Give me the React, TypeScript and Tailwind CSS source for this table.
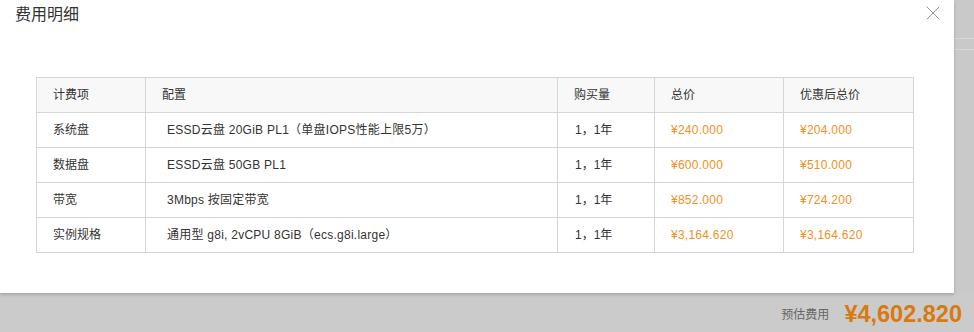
import { X } from "lucide-react";

const rows = [
  { item: "系统盘", config: "ESSD云盘 20GiB PL1（单盘IOPS性能上限5万）", qty: "1，1年", total: "¥240.000", discount: "¥204.000" },
  { item: "数据盘", config: "ESSD云盘 50GB PL1", qty: "1，1年", total: "¥600.000", discount: "¥510.000" },
  { item: "带宽", config: "3Mbps 按固定带宽", qty: "1，1年", total: "¥852.000", discount: "¥724.200" },
  { item: "实例规格", config: "通用型 g8i, 2vCPU 8GiB（ecs.g8i.large）", qty: "1，1年", total: "¥3,164.620", discount: "¥3,164.620" },
];

const font = { fontFamily: '"Liberation Sans", Arial, "Noto Sans CJK SC", sans-serif' };

export default function App() {
  return (
    <div className="w-[974px] h-[332px] bg-[#cbcbcb] flex flex-col overflow-hidden" style={font}>
      <div className="flex h-[293px]">
        <div className="relative w-[954px] h-full bg-white shadow-[0_2px_3px_rgba(0,0,0,0.18)] z-10">
          <div className="pt-[5px] pl-[15px] text-[16px] leading-[20px] text-[#333]">费用明细</div>
          <button type="button" aria-label="close" className="absolute right-[9px] top-[1px] text-[#999]">
            <X size={24} strokeWidth={1} />
          </button>
          <table className="mt-[52px] ml-[36px] w-[877px] table-fixed border-collapse text-[12px] text-[#333]">
            <colgroup>
              <col className="w-[109px]" />
              <col className="w-[412px]" />
              <col className="w-[97px]" />
              <col className="w-[129px]" />
              <col className="w-[130px]" />
            </colgroup>
            <thead>
              <tr className="h-[35px] bg-[#f8f8f8]">
                <th className="border border-[#d6d6d6] pl-[16px] text-left font-normal">计费项</th>
                <th className="border border-[#d6d6d6] pl-[16px] text-left font-normal">配置</th>
                <th className="border border-[#d6d6d6] pl-[16px] text-left font-normal">购买量</th>
                <th className="border border-[#d6d6d6] pl-[16px] text-left font-normal">总价</th>
                <th className="border border-[#d6d6d6] pl-[16px] text-left font-normal">优惠后总价</th>
              </tr>
            </thead>
            <tbody>
              {rows.map((r) => (
                <tr key={r.item} className="h-[35px]">
                  <td className="border border-[#d6d6d6] pl-[16px]">{r.item}</td>
                  <td className="border border-[#d6d6d6] pl-[21px] tracking-[0.25px]">{r.config}</td>
                  <td className="border border-[#d6d6d6] pl-[17px]">{r.qty}</td>
                  <td className="border border-[#d6d6d6] pl-[16px] tracking-[0.25px] text-[#f0901e]">{r.total}</td>
                  <td className="border border-[#d6d6d6] pl-[16px] tracking-[0.25px] text-[#f0901e]">{r.discount}</td>
                </tr>
              ))}
            </tbody>
          </table>
        </div>
        <div className="flex-1 flex flex-col bg-[#c9c9c9]">
          <div className="h-[38px]" />
          <div className="h-[11px] border-t border-[#d9d9d9]" />
          <div className="border-t border-[#d9d9d9]" />
        </div>
      </div>
      <div className="flex flex-1 items-center justify-end pr-[12px] pt-[4px] gap-[15px]">
        <span className="text-[12px] text-[#666]">预估费用</span>
        <span className="text-[23.5px] font-bold leading-none text-[#d77a10]">¥4,602.820</span>
      </div>
    </div>
  );
}
